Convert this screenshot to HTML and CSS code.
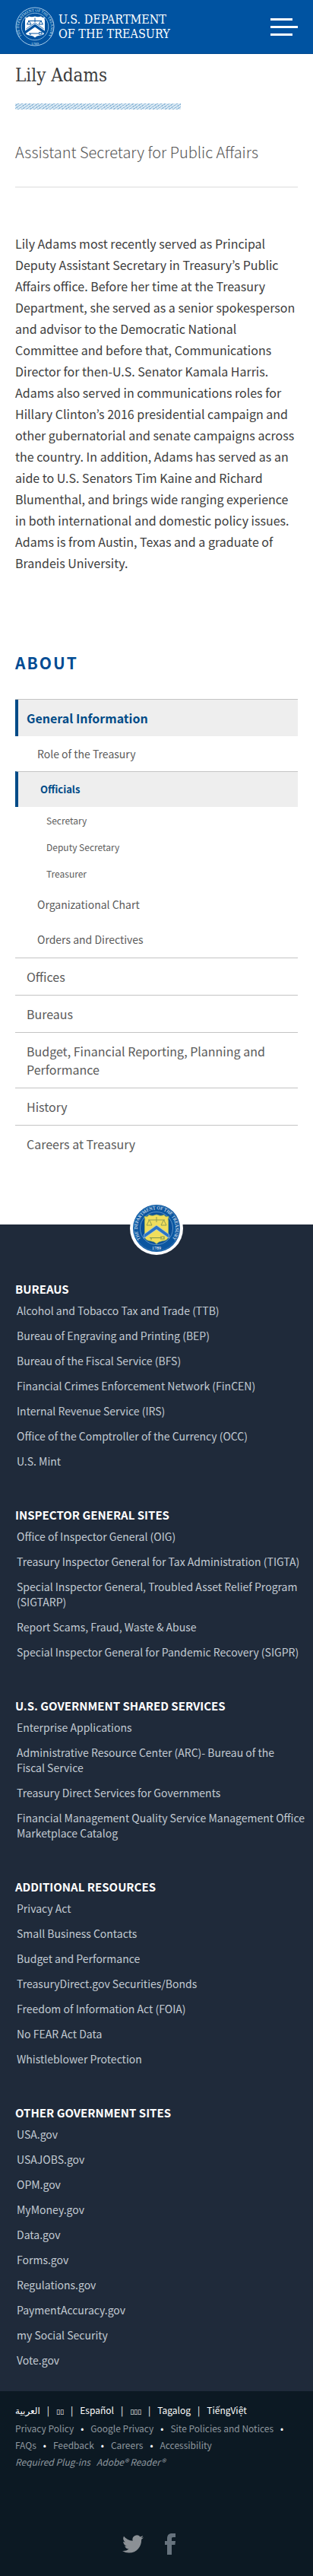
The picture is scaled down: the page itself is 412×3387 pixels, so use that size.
FILE: index.html
```html
<!DOCTYPE html>
<html lang="en">
<head>
<meta charset="utf-8">
<meta name="viewport" content="width=device-width, initial-scale=1">
<title>Lily Adams | U.S. Department of the Treasury</title>
<link rel="stylesheet" href="styles.css">
</head>
<body>
<header class="site-header">
  <a class="brand" href="#">
    <svg class="brand-seal" viewBox="0 0 52 52" aria-hidden="true">
      <defs><path id="ring-a" d="M10.6 41.4A21 21 0 1 1 41.4 41.4"/></defs>
      <circle cx="26" cy="26" r="25" fill="none" stroke="#a9cdea" stroke-width="1"/>
      <circle cx="26" cy="26" r="17.8" fill="none" stroke="#a9cdea" stroke-width=".8"/>
      <text class="seal-text seal-text-light"><textPath href="#ring-a" startOffset="50%" text-anchor="middle">THE DEPARTMENT OF THE TREASURY</textPath></text>
      <text class="seal-text seal-text-light" x="26" y="49.5" text-anchor="middle">1789</text>
      <path d="M13 13.5Q16 15 18 12.5Q22 14 26 12.5Q30 14 34 12.5Q36 15 39 13.500Q38 16 39 18V32Q39 37 33 37.500Q28 38 26 40.500Q24 38 19 37.500Q13 37 13 32V18Q14 16 13 13.500Z" fill="#fff"/>
      <path d="M12.500 32L26 22.500L39.500 32V36L26 26.500L12.500 36Z" fill="#0053a1"/>
      <path d="M14.500 29L26 21L37.500 29" fill="none" stroke="#0053a1" stroke-width=".8"/>
      <path d="M17 18.500H35M26 14.500V20M15.500 23H21L18.200 18.500ZM31 23H36.500L33.800 18.500Z" fill="none" stroke="#0053a1" stroke-width="1"/>
      <path d="M18 35H32M31 33.500H35V36H31M20 35V37" fill="none" stroke="#0053a1" stroke-width="1.100"/>
    </svg>
    <span class="brand-name">U.S. DEPARTMENT<br>OF THE TREASURY</span>
  </a>
  <button class="menu-button" type="button" aria-label="Menu">
    <span class="bar bar-short"></span>
    <span class="bar"></span>
    <span class="bar bar-short"></span>
  </button>
</header>

<main class="content">
  <h1 class="page-title">Lily Adams</h1>
  <div class="title-rule"></div>
  <p class="role">Assistant Secretary for Public Affairs</p>
  <p class="bio">Lily Adams most recently served as Principal Deputy Assistant Secretary in Treasury’s Public Affairs office. Before her time at the Treasury Department, she served as a senior spokesperson and advisor to the Democratic National Committee and before that, Communications Director for then-U.S. Senator Kamala Harris. Adams also served in communications roles for Hillary Clinton’s 2016 presidential campaign and other gubernatorial and senate campaigns across the country. In addition, Adams has served as an aide to U.S. Senators Tim Kaine and Richard Blumenthal, and brings wide ranging experience in both international and domestic policy issues. Adams is from Austin, Texas and a graduate of Brandeis University.</p>

  <nav class="about" aria-labelledby="about-title">
    <h2 class="about-title" id="about-title">ABOUT</h2>
    <ul class="menu">
      <li class="menu-item">
        <a class="menu-link menu-active" href="#">General Information</a>
        <ul class="submenu">
          <li><a class="sub-link" href="#">Role of the Treasury</a></li>
          <li>
            <a class="sub-link sub-active" href="#">Officials</a>
            <ul class="leafmenu">
              <li><a class="leaf-link" href="#">Secretary</a></li>
              <li><a class="leaf-link" href="#">Deputy Secretary</a></li>
              <li><a class="leaf-link" href="#">Treasurer</a></li>
            </ul>
          </li>
          <li><a class="sub-link" href="#">Organizational Chart</a></li>
          <li><a class="sub-link" href="#">Orders and Directives</a></li>
        </ul>
      </li>
      <li class="menu-item"><a class="menu-link" href="#">Offices</a></li>
      <li class="menu-item"><a class="menu-link" href="#">Bureaus</a></li>
      <li class="menu-item"><a class="menu-link" href="#">Budget, Financial Reporting, Planning and Performance</a></li>
      <li class="menu-item"><a class="menu-link" href="#">History</a></li>
      <li class="menu-item"><a class="menu-link" href="#">Careers at Treasury</a></li>
    </ul>
  </nav>
</main>

<footer class="site-footer">
  <div class="footer-seal">
    <svg class="footer-seal-art" viewBox="0 0 62 62" aria-hidden="true">
      <defs><path id="ring-b" d="M13.300 48.700A25 25 0 1 1 48.700 48.700"/></defs>
      <circle cx="31" cy="31" r="31" fill="#0b56a0"/>
      <circle cx="31" cy="31" r="29.800" fill="none" stroke="#4f8fc4" stroke-width=".6"/>
      <circle cx="31" cy="31" r="21.500" fill="#0a4f9a" stroke="#7fb0d8" stroke-width=".7"/>
      <text class="seal-text seal-text-large"><textPath href="#ring-b" startOffset="50%" text-anchor="middle">THE DEPARTMENT OF THE TREASURY</textPath></text>
      <text class="seal-text seal-text-large" x="31" y="58.500" text-anchor="middle">1789</text>
      <path d="M15 15.500Q19 17 21 13.500Q26 15.500 31 13Q36 15.500 41 13.500Q43 17 47 15.500Q45.500 19 46.500 22V42Q46 47 39 47.500Q33 48.500 31 51.500Q29 48.500 23 47.500Q16 47 15.500 42V22Q16.500 19 15 15.500Z" fill="#f0de5c" stroke="#9fb65a" stroke-width=".8"/>
      <path d="M14.500 39L31 27L47.500 39V44L31 32.500L14.500 44Z" fill="#2b74c4" stroke="#a8cdea" stroke-width=".7"/>
      <path d="M20 20H42M31 16V23M18 27H25L21.500 20ZM37 27H44L40.500 20Z" fill="none" stroke="#8c9c52" stroke-width="1"/>
      <path d="M22 43.500H38M36 42H41V45H36M24 43.500V46" fill="none" stroke="#7c9350" stroke-width="1.200"/>
    </svg>
  </div>
  <div class="footer-links">
    <section class="link-group">
      <h3 class="group-title">BUREAUS</h3>
      <ul class="group-list">
        <li><a href="#">Alcohol and Tobacco Tax and Trade (TTB)</a></li>
        <li><a href="#">Bureau of Engraving and Printing (BEP)</a></li>
        <li><a href="#">Bureau of the Fiscal Service (BFS)</a></li>
        <li><a href="#">Financial Crimes Enforcement Network (FinCEN)</a></li>
        <li><a href="#">Internal Revenue Service (IRS)</a></li>
        <li><a href="#">Office of the Comptroller of the Currency (OCC)</a></li>
        <li><a href="#">U.S. Mint</a></li>
      </ul>
    </section>
    <section class="link-group">
      <h3 class="group-title">INSPECTOR GENERAL SITES</h3>
      <ul class="group-list">
        <li><a href="#">Office of Inspector General (OIG)</a></li>
        <li><a href="#">Treasury Inspector General for Tax Administration (TIGTA)</a></li>
        <li><a href="#">Special Inspector General, Troubled Asset Relief Program (SIGTARP)</a></li>
        <li><a href="#">Report Scams, Fraud, Waste &amp; Abuse</a></li>
        <li><a href="#">Special Inspector General for Pandemic Recovery (SIGPR)</a></li>
      </ul>
    </section>
    <section class="link-group">
      <h3 class="group-title">U.S. GOVERNMENT SHARED SERVICES</h3>
      <ul class="group-list">
        <li><a href="#">Enterprise Applications</a></li>
        <li><a href="#">Administrative Resource Center (ARC)- Bureau of the <span class="keep">Fiscal Service</span></a></li>
        <li><a href="#">Treasury Direct Services for Governments</a></li>
        <li><a href="#">Financial Management Quality Service Management Office Marketplace Catalog</a></li>
      </ul>
    </section>
    <section class="link-group">
      <h3 class="group-title">ADDITIONAL RESOURCES</h3>
      <ul class="group-list">
        <li><a href="#">Privacy Act</a></li>
        <li><a href="#">Small Business Contacts</a></li>
        <li><a href="#">Budget and Performance</a></li>
        <li><a href="#">TreasuryDirect.gov Securities/Bonds</a></li>
        <li><a href="#">Freedom of Information Act (FOIA)</a></li>
        <li><a href="#">No FEAR Act Data</a></li>
        <li><a href="#">Whistleblower Protection</a></li>
      </ul>
    </section>
    <section class="link-group">
      <h3 class="group-title">OTHER GOVERNMENT SITES</h3>
      <ul class="group-list">
        <li><a href="#">USA.gov</a></li>
        <li><a href="#">USAJOBS.gov</a></li>
        <li><a href="#">OPM.gov</a></li>
        <li><a href="#">MyMoney.gov</a></li>
        <li><a href="#">Data.gov</a></li>
        <li><a href="#">Forms.gov</a></li>
        <li><a href="#">Regulations.gov</a></li>
        <li><a href="#">PaymentAccuracy.gov</a></li>
        <li><a href="#">my Social Security</a></li>
        <li><a href="#">Vote.gov</a></li>
      </ul>
    </section>
  </div>
  <div class="footer-bottom">
    <ul class="languages">
      <li><a class="arabic" href="#" lang="ar">العربية</a></li>
      <li><a class="boxes" href="#">▯▯</a></li>
      <li><a href="#" lang="es">Español</a></li>
      <li><a class="boxes" href="#">▯▯▯</a></li>
      <li><a href="#" lang="tl">Tagalog</a></li>
      <li><a href="#" lang="vi">TiếngViệt</a></li>
    </ul>
    <ul class="policies">
      <li><a href="#">Privacy Policy</a></li>
      <li><a href="#">Google Privacy</a></li>
      <li><a href="#">Site Policies and Notices</a></li>
      <li><a href="#">FAQs</a></li>
      <li><a href="#">Feedback</a></li>
      <li><a href="#">Careers</a></li>
      <li><a href="#">Accessibility</a></li>
    </ul>
    <p class="plugins"><a href="#">Required Plug-ins</a> <a href="#">Adobe® Reader®</a></p>
    <div class="social">
      <a href="#" aria-label="Twitter"><svg class="icon-twitter" viewBox="0 0 28 24" aria-hidden="true"><path d="M28 2.800a11 11 0 0 1-3.200.9A5.700 5.700 0 0 0 27.200.5a11.200 11.200 0 0 1-3.600 1.400 5.750 5.750 0 0 0-9.900 5.300A16.200 16.200 0 0 1 2 1.200a5.800 5.800 0 0 0 1.800 7.700 5.600 5.600 0 0 1-2.600-.7c0 2.800 1.900 5.200 4.600 5.700a5.800 5.800 0 0 1-2.600.1 5.700 5.700 0 0 0 5.400 4A11.500 11.500 0 0 1 0 20.400 16.200 16.200 0 0 0 8.800 23c10.900 0 16.700-9.200 16.300-17.400A11.800 11.800 0 0 0 28 2.800Z" fill="#8b9095"/></svg></a>
      <a href="#" aria-label="Facebook"><svg class="icon-facebook" viewBox="0 0 14 28" aria-hidden="true"><path d="M3 28V15H0V10H3V7C3 2.500 5 0 9.500 0H14V5H11C9.200 5 9 5.700 9 7V10H14L13.400 15H9V28Z" fill="#66727d"/></svg></a>
    </div>
  </div>
</footer>
</body>
</html>
```

FILE: styles.css
```css
* {
  box-sizing: border-box;
}

body {
  margin: 0;
  background: #fff;
  color: #3d3d3d;
  font-family: "Noto Sans CJK KR", "Noto Sans", sans-serif;
  font-size: 16px;
}

h1, h2, h3, p, ul {
  margin: 0;
  padding: 0;
}

ul {
  list-style: none;
}

a {
  color: inherit;
  text-decoration: none;
}

/* Header */

.site-header {
  display: flex;
  align-items: center;
  justify-content: space-between;
  height: 71px;
  padding: 0 20px;
  background: #0053a1;
  border-bottom: 1px solid #004a90;
}

.brand {
  display: flex;
  align-items: center;
  gap: 5px;
  color: #fff;
}

.brand-seal {
  width: 52px;
  height: 52px;
}

.brand-name {
  font-family: "DejaVu Serif Condensed", "DejaVu Serif", serif;
  font-size: 16px;
  line-height: 19px;
}

.seal-text {
  font-family: "Liberation Serif", serif;
  font-size: 5px;
  fill: #fff;
}

.seal-text-light {
  fill: #cfe4f5;
}

.seal-text-large {
  font-size: 6px;
}

.menu-button {
  display: flex;
  flex-direction: column;
  gap: 7px;
  width: 36px;
  padding: 0;
  border: 0;
  background: none;
}

.bar {
  width: 36px;
  height: 3px;
  background: #fff;
}

.bar-short {
  width: 29px;
}

/* Profile */

.content {
  padding: 8px 20px 82px;
}

.page-title {
  font-family: "DejaVu Serif Condensed", "DejaVu Serif", serif;
  font-size: 24px;
  font-weight: 300;
  line-height: 40px;
}

.title-rule {
  width: 218px;
  height: 8px;
  margin-top: 17px;
  background: repeating-linear-gradient(145deg, #d9e8f3 0 2px, #8fb9d9 2px 3px);
}

.role {
  padding: 40px 0 30px;
  border-bottom: 2px solid #ececec;
  color: #555;
  font-size: 20px;
  font-weight: 300;
  line-height: 31px;
}

.bio {
  padding-top: 59px;
  line-height: 28px;
}

/* Section menu */

.about {
  padding-top: 102px;
}

.about-title {
  color: #004b93;
  font-size: 21px;
  font-weight: 700;
  letter-spacing: 2px;
  line-height: 30px;
}

.menu {
  margin-top: 33px;
  color: #5b5b5b;
}

.menu-item {
  border-top: 1px solid #c4c4c4;
}

.menu-link {
  display: block;
  padding: 12px 15px;
  line-height: 24px;
}

.menu-active,
.sub-active {
  border-left: 4px solid #004b87;
  background: #eee;
  color: #004b87;
  font-weight: 700;
}

.menu-active {
  padding-left: 11px;
}

.submenu {
  padding-bottom: 1px;
}

.sub-link {
  display: block;
  padding: 12px 29px;
  font-size: 14px;
  line-height: 22px;
}

.sub-active {
  border-top: 1px solid #c4c4c4;
  font-size: 13px;
}

.leaf-link {
  display: block;
  padding: 7px 41px;
  font-size: 12px;
  line-height: 21px;
}

/* Footer */

.site-footer {
  display: flow-root;
  background: #1f2a3a;
}

.footer-seal {
  display: flex;
  align-items: center;
  justify-content: center;
  width: 70px;
  height: 70px;
  margin: -30px auto 0;
  border-radius: 50%;
  background: #fff;
}

.footer-seal-art {
  width: 62px;
  height: 62px;
}

.footer-links {
  display: grid;
  gap: 49px;
  padding: 33px 10px 31px 20px;
}

.group-title {
  color: #fff;
  font-size: 15px;
  font-weight: 700;
  line-height: 24px;
}

.group-list {
  display: grid;
  gap: 13px;
  padding: 6px 0 0 2px;
  color: #c3cbd3;
  font-size: 14px;
  line-height: 20px;
}

.keep {
  white-space: nowrap;
}

.footer-bottom {
  padding: 14px 20px 28px;
  background: #0c1923;
  color: #8e979e;
  font-size: 12px;
  line-height: 22px;
}

.languages,
.policies {
  display: flex;
  flex-wrap: wrap;
}

.languages {
  color: #fff;
}

.languages li + li::before {
  content: "|";
  padding: 0 9px;
}

.arabic {
  font-family: "DejaVu Sans", sans-serif;
}

.boxes {
  font-family: "DejaVu Sans", sans-serif;
  font-size: 9px;
}

.policies li:not(:last-child)::after {
  content: "•";
  padding: 0 9px;
  color: #fff;
}

.plugins {
  display: flex;
  gap: 8px;
  font-style: italic;
}

.social {
  display: flex;
  align-items: center;
  justify-content: center;
  gap: 28px;
  padding: 83px 20px 0 0;
}

.social a {
  display: flex;
}

.icon-twitter {
  width: 28px;
  height: 25px;
}

.icon-facebook {
  width: 14px;
  height: 28px;
}
```
